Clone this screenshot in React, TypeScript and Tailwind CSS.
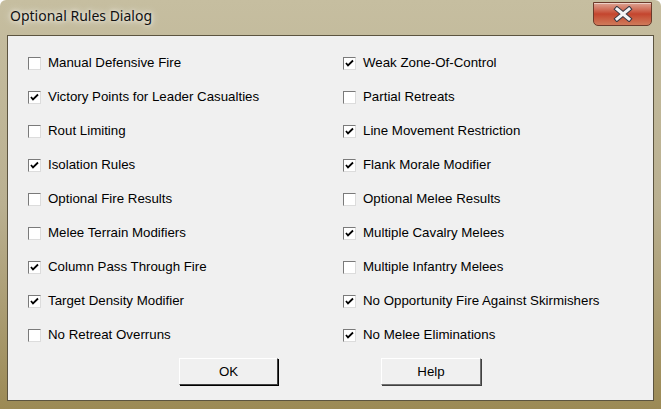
import React from 'react'

const left: [string, boolean][] = [
  ['Manual Defensive Fire', false],
  ['Victory Points for Leader Casualties', true],
  ['Rout Limiting', false],
  ['Isolation Rules', true],
  ['Optional Fire Results', false],
  ['Melee Terrain Modifiers', false],
  ['Column Pass Through Fire', true],
  ['Target Density Modifier', true],
  ['No Retreat Overruns', false],
]

const right: [string, boolean][] = [
  ['Weak Zone-Of-Control', true],
  ['Partial Retreats', false],
  ['Line Movement Restriction', true],
  ['Flank Morale Modifier', true],
  ['Optional Melee Results', false],
  ['Multiple Cavalry Melees', true],
  ['Multiple Infantry Melees', false],
  ['No Opportunity Fire Against Skirmishers', true],
  ['No Melee Eliminations', true],
]

function Box({ checked }: { checked: boolean }) {
  return (
    <span className="w-[13px] h-[13px] shrink-0 bg-white border border-t-[#7a7a7a] border-l-[#7a7a7a] border-b-[#dcdcdc] border-r-[#dcdcdc] flex items-center justify-center">
      {checked && (
        <svg width="9" height="9" viewBox="0 0 9 9">
          <path d="M1 4 L3 6.5 L8 1.5" fill="none" stroke="#000" strokeWidth="1.8" />
        </svg>
      )}
    </span>
  )
}

function Row({ label, checked }: { label: string; checked: boolean }) {
  return (
    <div className="h-[34px] flex items-center gap-[7px]">
      <Box checked={checked} />
      <span className="text-[13.3px] text-black leading-none">{label}</span>
    </div>
  )
}

function Btn({ label, isDefault }: { label: string; isDefault?: boolean }) {
  return (
    <button
      className={
        'h-[27px] bg-[#f0f0f0] text-[13.3px] text-black border border-t-white border-l-white ' +
        (isDefault
          ? 'w-[99px] border-b-[#404040] border-r-[#404040] shadow-[1px_1px_0_#000]'
          : 'w-[100px] border-b-[#707070] border-r-[#707070] shadow-[1px_1px_0_#404040]')
      }
    >
      {label}
    </button>
  )
}

export default function App() {
  return (
    <div
      className="w-[661px] h-[409px] flex flex-col bg-gradient-to-b from-[#c6bea0] via-[#bab091] to-[#9c8a55] rounded-t-[6px] overflow-hidden"
      style={{ fontFamily: '"Liberation Sans", Arial, sans-serif' }}
    >
      <div className="h-[35px] shrink-0 flex items-start justify-between pl-[10px] pr-[9px]">
        <span
          className="mt-[9px] text-[14px] text-[#111] leading-none [text-shadow:0_0_8px_rgba(255,255,255,0.9),0_0_4px_rgba(255,255,255,0.8)]"
          style={{ fontFamily: '"Noto Sans", sans-serif' }}
        >
          Optional Rules Dialog
        </span>
        <div className="mt-[2px] w-[59px] h-[24px] rounded-b-[5px] border border-[#6b3a2a] bg-gradient-to-b from-[#dca494] via-[#c4452e] to-[#cf7a5a] flex items-center justify-center shadow-[inset_0_1px_0_rgba(255,255,255,0.5)]">
          <svg width="22" height="16" viewBox="0 0 22 16">
            <path d="M5 3 L17 13 M17 3 L5 13" stroke="#3a3a44" strokeWidth="5" strokeLinecap="square" />
            <path d="M5 3 L17 13 M17 3 L5 13" stroke="#f4f4f6" strokeWidth="3" strokeLinecap="square" />
          </svg>
        </div>
      </div>
      <div className="mx-[7px] mb-[8px] flex-1 border border-[#5c5440] bg-[#f0f0f0] flex flex-col pt-[10px]">
        <div className="flex pl-[20px]">
          <div className="w-[315px] flex flex-col">
            {left.map(([l, c]) => (
              <Row key={l} label={l} checked={c} />
            ))}
          </div>
          <div className="flex flex-col">
            {right.map(([l, c]) => (
              <Row key={l} label={l} checked={c} />
            ))}
          </div>
        </div>
        <div className="flex mt-[6px] pl-[171px] gap-[103px]">
          <Btn label="OK" isDefault />
          <Btn label="Help" />
        </div>
      </div>
    </div>
  )
}
